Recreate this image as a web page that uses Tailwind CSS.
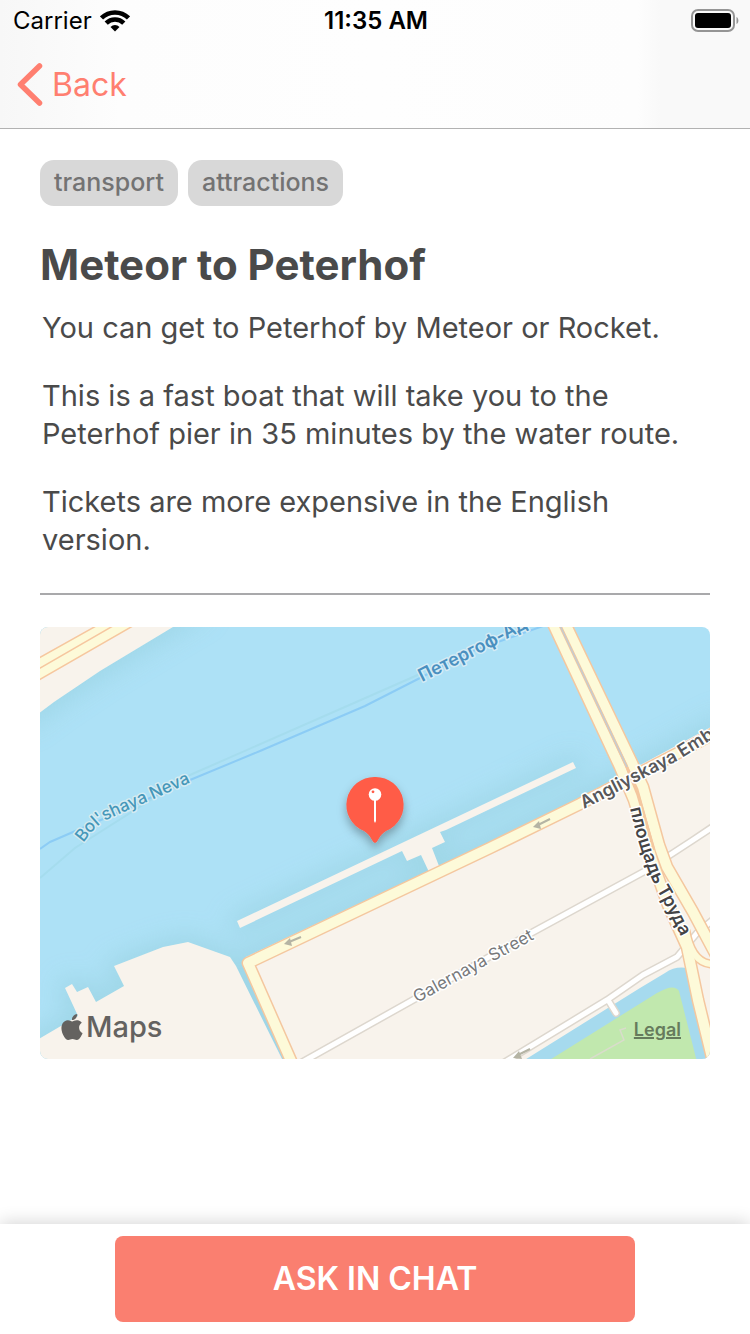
<!DOCTYPE html>
<html lang="en">
<head>
<meta charset="utf-8">
<meta name="viewport" content="width=device-width, initial-scale=1">
<title>Meteor to Peterhof</title>
<script src="https://cdn.jsdelivr.net/npm/@tailwindcss/browser@4"></script>
</head>
<body class="flex min-h-screen flex-col bg-white font-['Inter','Noto_Sans',sans-serif] text-[#4a4a4a]">

<header class="border-b border-[#b2b2b2] bg-[linear-gradient(90deg,#f7f7f7,#fdfdfd_16%,#fefefe_50%,#fdfdfd_85%,#f9f9f9_88%)]">
  <div class="grid h-[42px] grid-cols-3 items-center pr-[11px] pl-[13px] text-2xl text-black">
    <div class="flex items-center gap-2">
      <span>Carrier</span>
      <svg class="h-[22px] w-[30px]" viewBox="0 0 30 22" fill="none" stroke="#000" stroke-width="4.500" aria-label="Wi-Fi">
        <path d="M1.500 8a19.200 19.200 0 0 1 27 0"/>
        <path d="M6.200 13.200a12.400 12.400 0 0 1 17.600 0"/>
        <path d="M15 21.500l-4.500-4.600a6.400 6.400 0 0 1 9 0z" fill="#000" stroke="none"/>
      </svg>
    </div>
    <time class="text-center font-semibold whitespace-nowrap">11:35 AM</time>
    <svg class="h-6 w-12 justify-self-end" viewBox="0 0 48 24" aria-label="Battery full">
      <rect x="1" y="1" width="42" height="21" rx="6" fill="none" stroke="#959595" stroke-width="2"/>
      <rect x="4" y="4" width="36" height="15" rx="3" fill="#000"/>
      <path d="M45.500 8c2.500 1.200 2.500 6 0 7z" fill="#959595"/>
    </svg>
  </div>
  <nav class="flex h-[86px] items-center pl-4">
    <a href="#" class="flex items-center gap-2 text-[32px] leading-10 text-[#ff7f70]">
      <svg class="h-11 w-7" viewBox="0 0 28 44" fill="none" stroke="currentColor" stroke-width="5.500" stroke-linecap="round" stroke-linejoin="round" aria-hidden="true"><path d="M23.500 3L4.500 21.500l19 18.500"/></svg>
      <span>Back</span>
    </a>
  </nav>
</header>

<main class="flex grow flex-col px-10 pt-[31px] pb-10">
  <ul class="flex gap-2.5 text-[25px] font-medium text-[#737373]">
    <li class="flex h-[46px] items-center rounded-[14px] bg-[#d8d8d8] px-3.5">transport</li>
    <li class="flex h-[46px] items-center rounded-[14px] bg-[#d8d8d8] px-3.5">attractions</li>
  </ul>
  <h1 class="mt-8 text-[42px] leading-[54px] font-bold">Meteor to Peterhof</h1>
  <div class="mt-[17px] space-y-[30px] pl-0.5 text-[29px] leading-[38px]">
    <p>You can get to Peterhof by Meteor or Rocket.</p>
    <p>This is a fast boat that will take you to the Peterhof pier in 35 minutes by the water route.</p>
    <p>Tickets are more expensive in the English version.</p>
  </div>
  <hr class="mt-[34px] border-t-2 border-[#a9a9ab]">

  <section class="relative mt-8 h-[432px] overflow-hidden rounded-lg" aria-label="Map">
    <svg class="h-full w-full" viewBox="40 627 670 432" preserveAspectRatio="xMidYMid slice">
      <defs>
        <filter id="soft" x="-20%" y="-20%" width="140%" height="140%"><feGaussianBlur stdDeviation="12"/></filter>
        <filter id="pinShadow" x="-50%" y="-50%" width="200%" height="200%"><feDropShadow dx="0" dy="5" stdDeviation="5" flood-color="#000" flood-opacity=".3"/></filter>
        <path id="land" d="M30 617H190L173 627L100 671L54 702L30 720ZM30 1044L78 1016L65 988L72 984L77 992L88 987L96 1002L124 986L114 966L163 947L188 942L230 957L236 966L285 1065H30ZM246 957L490 842L581 797L720 722V1070H292L243 964Z"/>
        <path id="pier" d="M237 921L573 762L576 768L446 830L440 832L445 842L432 848L439 866L429 872L421 855L407 861L402 851L240 928Z"/>
        <path id="t1" d="M83 843Q94 828 104 821Q125 811 147 802L205 776"/>
        <path id="t2" d="M422 682L480 653L494 646L560 610"/>
        <path id="t3" d="M584 809L677 761L740 722"/>
        <path id="t4" d="M630 808Q637 840 646 864Q652 882 661 897L691 956"/>
        <path id="t5" d="M417 1003L560 925"/>
      </defs>
      <rect x="30" y="617" width="690" height="452" fill="#ade1f6"/>
      <g filter="url(#soft)" fill="#9dd5e5" stroke="#9dd5e5" stroke-width="14" opacity=".85">
        <use href="#land"/><use href="#pier"/>
      </g>
      <g fill="none">
        <path d="M40 878L75 848L190 775L420 674" stroke="#a5dcee" stroke-width="2"/>
        <path d="M40 849L50 842L110 816L190 780L260 751L365 706L420 678L470 652L560 620" stroke="#8cccf5" stroke-width="2"/>
      </g>
      <g fill="#f8f3ec"><use href="#land"/><use href="#pier"/></g>

      <!-- north-west avenue -->
      <path d="M30 663L95 627L113 617H150L30 685Z" fill="#fdfad9"/>
      <path d="M30 663L105 621M30 674L125 619M30 685L145 619" stroke="#f6c79f" stroke-width="1.500"/>

      <!-- canal and park -->
      <path d="M515 1066L640 988L665 973Q675 966 687 968L694 975L716 1066Z" fill="#a6daee"/>
      <path d="M540 1066L657 993Q674 983 679 991L698 1066Z" fill="#c1e8ae"/>
      <path d="M626 1028L620 1030L624 1040L590 1059" fill="none" stroke="#d9dccb" stroke-width="1.500"/>

      <!-- side streets -->
      <g fill="none" stroke-linejoin="round">
        <g stroke="#ddd7ce" stroke-width="8">
          <path d="M297 1065L413 1000L533 932L647 870L693 840L720 822"/>
          <path d="M500 1065L607 1000L643 975L677 957L697 933L720 914"/>
          <path d="M608 1000L616 1013" stroke-linecap="round"/>
        </g>
        <g stroke="#fff" stroke-width="5">
          <path d="M297 1065L413 1000L533 932L647 870L693 840L720 822"/>
          <path d="M500 1065L607 1000L643 975L677 957L697 933L720 914"/>
          <path d="M608 1000L616 1013" stroke-linecap="round"/>
        </g>
      </g>

      <!-- main roads -->
      <g fill="none" stroke-linejoin="round">
        <g stroke="#f4c79f" stroke-width="13">
          <path d="M292 1063L248 963L490 848L580 804L680 752L720 730"/>
          <path d="M550 617L620 767L634 800L652 860L668 905L687 947L698 1000L714 1066"/>
          <path d="M562 617L632 763L643 787L659 845L667 867L693 912L716 955"/>
          <path d="M686 930Q692 966 716 964" stroke-width="9"/>
        </g>
        <g stroke="#fdfad9" stroke-width="10">
          <path d="M292 1063L248 963L490 848L580 804L680 752L720 730"/>
          <path d="M550 617L620 767L634 800L652 860L668 905L687 947L698 1000L714 1066"/>
          <path d="M562 617L632 763L643 787L659 845L667 867L693 912L716 955"/>
          <path d="M686 930Q692 966 716 964" stroke-width="6"/>
        </g>
        <path d="M556 617L626 765L638 795L654 850" stroke="#f4c79f" stroke-width="3"/>
        <path d="M556 617L627 767" stroke="#c4ccd0" stroke-width="1.500"/>
      </g>

      <!-- one-way arrows -->
      <g fill="#b5b4a4" stroke="#b5b4a4">
        <path d="M284 944L290 938L292 946Z" stroke="none"/><path d="M289 942L301 937" stroke-width="2"/>
        <path d="M533 827L539 821L541 829Z" stroke="none"/><path d="M538 825L550 819" stroke-width="2"/>
        <path d="M513 1058L519 1051L522 1059Z" stroke="none"/><path d="M518 1055L530 1049" stroke-width="2"/>
      </g>

      <!-- labels -->
      <g class="text-lg font-semibold" paint-order="stroke" stroke-width="3" stroke-linejoin="round">
        <text class="text-[17px] font-medium" fill="#4597b9" stroke="#d5ebf2"><textPath href="#t1">Bol'shaya Neva</textPath></text>
        <text fill="#4a90c0" stroke="#d5ebf5"><textPath href="#t2">Петергоф-Ад</textPath></text>
        <text fill="#58585a" stroke="#fff"><textPath href="#t3">Angliyskaya Emb</textPath></text>
        <text fill="#444446" stroke="#fff"><textPath href="#t4">площадь Труда</textPath></text>
        <text class="text-[17px] font-normal" fill="#77797b" stroke="#fff"><textPath href="#t5">Galernaya Street</textPath></text>
      </g>

      <!-- pin -->
      <path filter="url(#pinShadow)" d="M375 777A28 28 0 0 1 386 831Q381 834 378 840Q375 846 372 840Q369 834 364 831A28 28 0 0 1 375 777Z" fill="#ff5b47"/>
      <circle cx="375" cy="794.500" r="6.300" fill="#fff"/><circle cx="373" cy="791.800" r="1.400" fill="#ff5b47"/>
      <path d="M374 800H376V821L375 823L374 821Z" fill="#fff"/>
    </svg>
    <div class="absolute bottom-3 left-5 flex items-center gap-0.5 text-[29px] leading-10 font-medium text-[#646260]">
      <svg class="h-[26px] w-6" viewBox="1 0 22 24" fill="currentColor" aria-hidden="true"><path d="M12.152 6.896c-.948 0-2.415-1.078-3.960-1.040-2.040.027-3.910 1.183-4.961 3.014-2.117 3.675-.546 9.103 1.519 12.090 1.013 1.454 2.208 3.090 3.792 3.039 1.520-.065 2.090-.987 3.935-.987 1.831 0 2.350.987 3.960.948 1.637-.026 2.676-1.480 3.676-2.948 1.156-1.688 1.636-3.325 1.662-3.415-.039-.013-3.182-1.221-3.220-4.857-.026-3.040 2.480-4.494 2.597-4.559-1.429-2.090-3.623-2.324-4.390-2.376-2-.156-3.675 1.090-4.610 1.090zM15.530 3.830c.843-1.012 1.400-2.427 1.245-3.830-1.207.052-2.662.805-3.532 1.818-.780.896-1.454 2.338-1.273 3.714 1.338.104 2.715-.688 3.559-1.701"/></svg>
      <span>Maps</span>
    </div>
    <a href="#" class="absolute right-[29px] bottom-[15px] text-lg font-semibold text-[#667b5c] underline decoration-2">Legal</a>
  </section>
</main>

<footer class="sticky bottom-0 flex justify-center bg-white px-10 py-3 shadow-[0_-2px_16px_rgba(0,0,0,0.16)]">
  <button type="button" class="h-[86px] w-full max-w-[520px] rounded-lg bg-[#fa7f70] text-[32px] font-semibold text-white">ASK IN CHAT</button>
</footer>
</body>
</html>
